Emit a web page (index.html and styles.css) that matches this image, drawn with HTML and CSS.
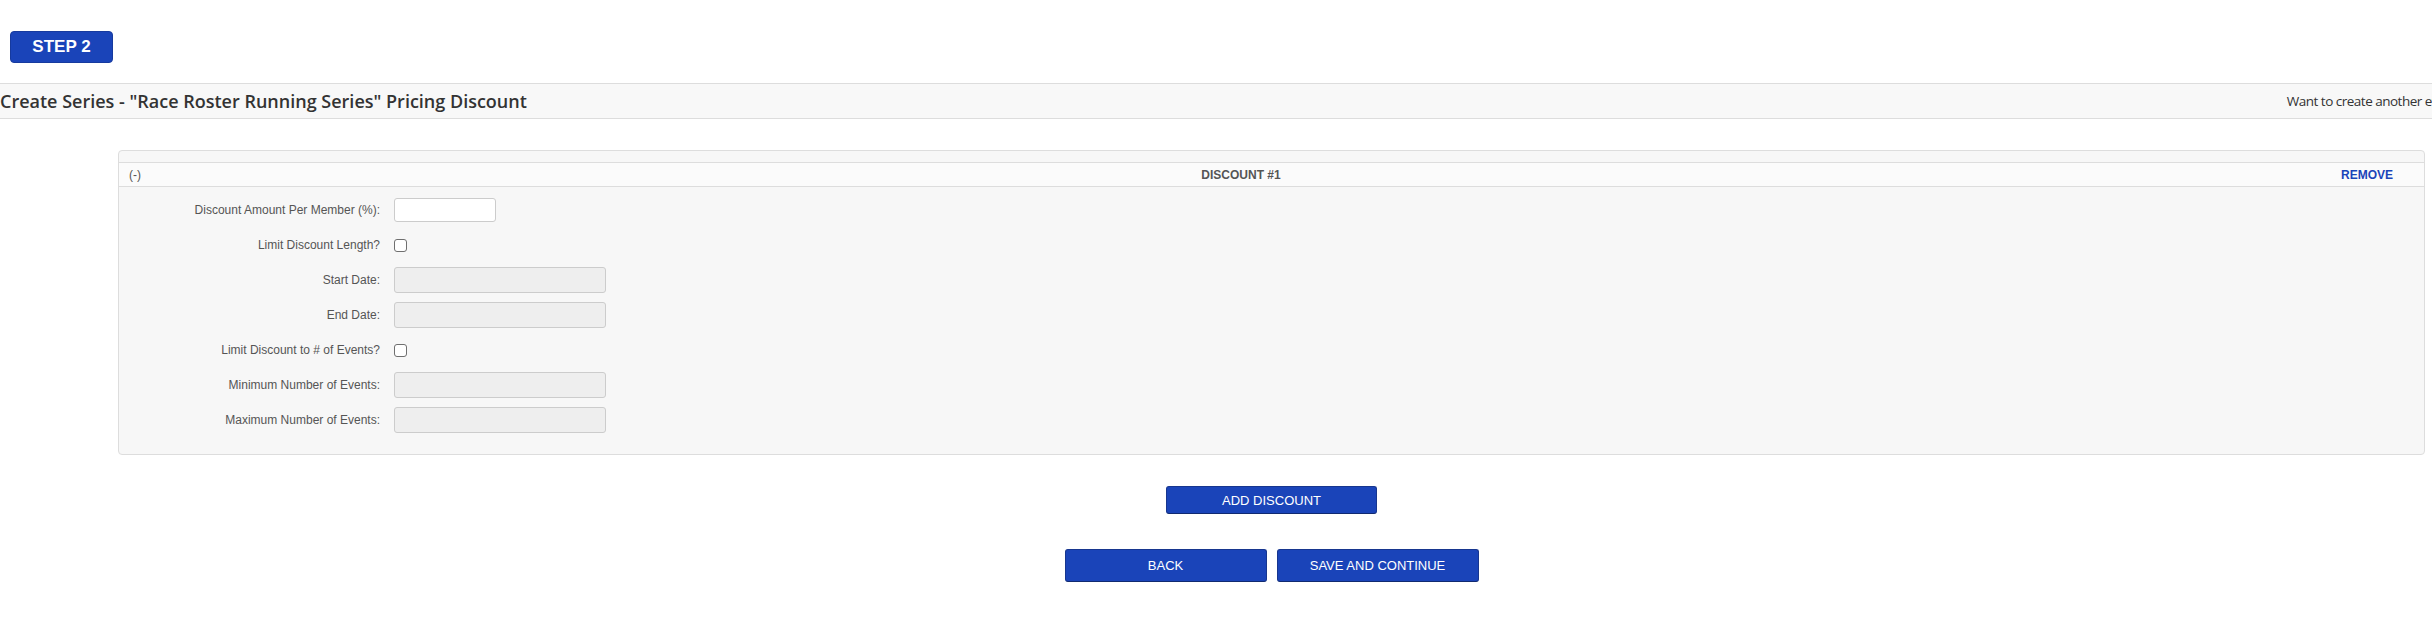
FILE: index.html
```html
<!DOCTYPE html>
<html lang="en">
<head>
    <meta charset="UTF-8">
    <meta name="viewport" content="width=device-width, initial-scale=1.0">
    <title>Create Series - Pricing Discount</title>
    <link rel="stylesheet" href="styles.css">
</head>
<body>
    <div class="page">
        <div class="step-wrap">
            <span class="step-badge">STEP 2</span>
        </div>

        <div class="page-header">
            <h2 class="page-title">Create Series - "Race Roster Running Series" Pricing Discount</h2>
            <div class="header-link">Want to create another event? Click here</div>
        </div>

        <div class="discount-panel">
            <div class="panel-head">
                <a class="toggle" href="#">(-)</a>
                <span class="panel-title">DISCOUNT #1</span>
                <a class="remove" href="#">REMOVE</a>
            </div>
            <div class="panel-body">
                <label class="field-label">Discount Amount Per Member (%):</label>
                <div><input type="text" class="field-input small"></div>

                <label class="field-label">Limit Discount Length?</label>
                <div><input type="checkbox" class="field-check"></div>

                <label class="field-label">Start Date:</label>
                <div><input type="text" class="field-input" disabled></div>

                <label class="field-label">End Date:</label>
                <div><input type="text" class="field-input" disabled></div>

                <label class="field-label">Limit Discount to # of Events?</label>
                <div><input type="checkbox" class="field-check"></div>

                <label class="field-label">Minimum Number of Events:</label>
                <div><input type="text" class="field-input" disabled></div>

                <label class="field-label">Maximum Number of Events:</label>
                <div><input type="text" class="field-input" disabled></div>
            </div>
        </div>

        <div class="actions add-row">
            <button class="btn btn-add">ADD DISCOUNT</button>
        </div>

        <div class="actions nav-row">
            <button class="btn btn-nav">BACK</button>
            <button class="btn btn-nav">SAVE AND CONTINUE</button>
        </div>
    </div>
</body>
</html>
```

FILE: styles.css
```css
html, body {
    overflow: hidden;
}

body {
    margin: 0;
    background: #fff;
    font-family: 'Liberation Sans', Arial, sans-serif;
    color: #555;
}

.page {
    width: 2542px;
    padding-top: 31px;
}

.step-wrap {
    padding-left: 10px;
    margin-bottom: 20px;
}

.step-badge {
    display: inline-flex;
    align-items: center;
    justify-content: center;
    width: 101px;
    height: 30px;
    background: #1a44b9;
    border: 1px solid #163a9e;
    border-radius: 4px;
    color: #fff;
    font-size: 17px;
    font-weight: bold;
}

.page-header {
    display: flex;
    align-items: center;
    height: 34px;
    background: #f8f8f8;
    border-top: 1px solid #ddd;
    border-bottom: 1px solid #ddd;
}

.page-title {
    margin: 0;
    font-family: 'Open Sans', sans-serif;
    font-size: 18px;
    font-weight: 600;
    color: #333;
    white-space: nowrap;
}

.header-link {
    margin-left: auto;
    margin-right: 20px;
    font-family: 'Open Sans', sans-serif;
    font-size: 13.5px;
    letter-spacing: -0.5px;
    color: #333;
    white-space: nowrap;
}

.discount-panel {
    margin: 31px 117px 0 118px;
    padding-top: 11px;
    background: #f7f7f7;
    border: 1px solid #ddd;
    border-radius: 4px;
}

.panel-head {
    display: flex;
    align-items: center;
    height: 23px;
    background: #fbfbfb;
    border-top: 1px solid #ddd;
    border-bottom: 1px solid #ddd;
    font-size: 12px;
}

.toggle {
    width: 20px;
    padding-left: 10px;
    color: #555;
    text-decoration: none;
}

.panel-title {
    flex: 1;
    text-align: center;
    font-weight: bold;
    color: #555;
}

.remove {
    width: 60px;
    padding-right: 31px;
    text-align: right;
    font-weight: bold;
    color: #1a44b9;
    text-decoration: none;
}

.panel-body {
    display: grid;
    grid-template-columns: 261px auto;
    grid-auto-rows: 26px;
    column-gap: 14px;
    row-gap: 9px;
    align-items: center;
    padding: 10px 0 21px;
}

.panel-body > div {
    display: flex;
    align-items: center;
}

.field-label {
    text-align: right;
    font-size: 12px;
    color: #555;
}

.field-input {
    box-sizing: border-box;
    width: 212px;
    height: 26px;
    margin: 0;
    background: #eee;
    border: 1px solid #ccc;
    border-radius: 3px;
}

.field-input.small {
    width: 102px;
    height: 24px;
    background: #fff;
}

.field-check {
    appearance: none;
    box-sizing: border-box;
    width: 13px;
    height: 13px;
    margin: 0;
    background: #fff;
    border: 1px solid #6f6f6f;
    border-radius: 3px;
}

.actions {
    display: flex;
    justify-content: center;
    gap: 10px;
    padding-left: 1px;
}

.add-row {
    margin-top: 31px;
}

.nav-row {
    margin-top: 35px;
}

.btn {
    height: 28px;
    background: #1a44b9;
    border: 1px solid #17368f;
    border-bottom-color: #112a70;
    border-radius: 3px;
    color: #fff;
    font-family: 'Liberation Sans', Arial, sans-serif;
    font-size: 13px;
    cursor: pointer;
}

.btn-add {
    width: 211px;
}

.btn-nav {
    width: 202px;
    height: 33px;
}
```
